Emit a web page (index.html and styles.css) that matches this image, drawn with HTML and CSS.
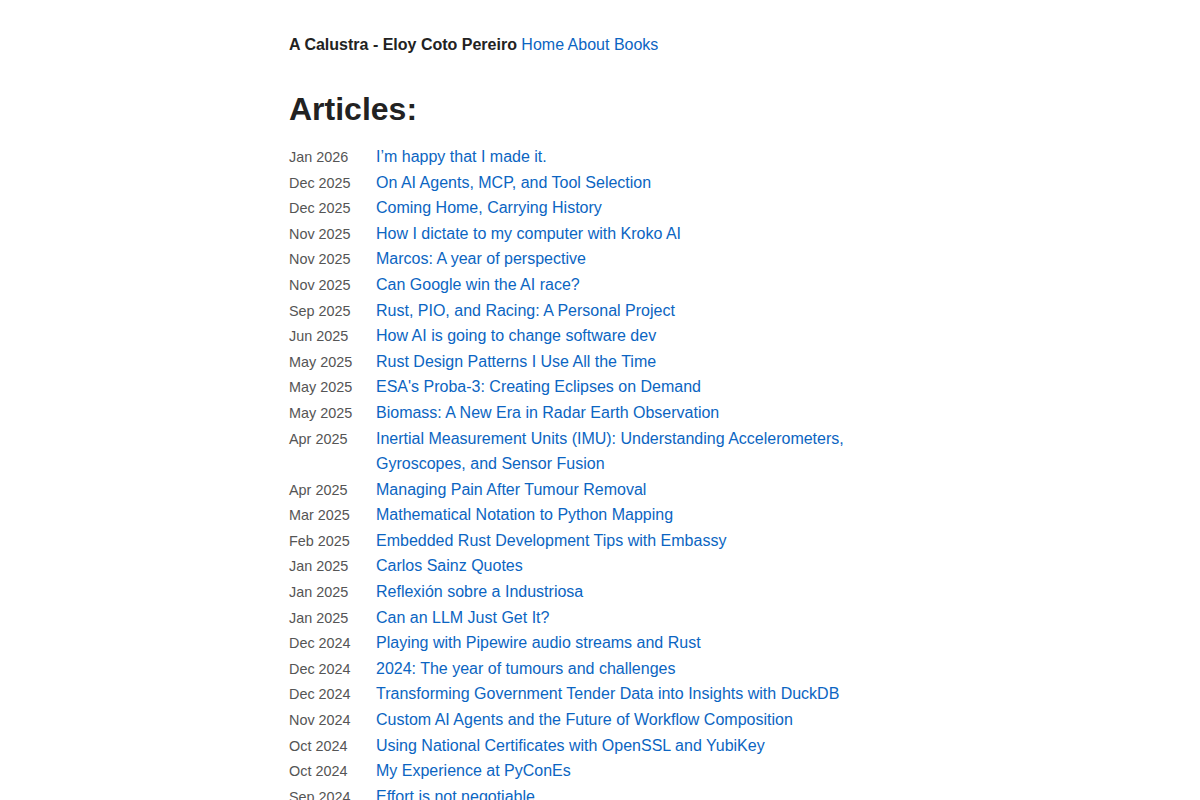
FILE: index.html
```html
<!DOCTYPE html>
<html lang="en">
<head>
    <meta charset="UTF-8">
    <meta name="viewport" content="width=device-width, initial-scale=1.0">
    <title>A Calustra - Eloy Coto Pereiro</title>
    <link rel="stylesheet" href="styles.css">
</head>
<body>
<main class="page">
    <nav class="site-nav">
        <strong class="site-title">A Calustra - Eloy Coto Pereiro</strong>
        <a href="#">Home</a>
        <a href="#">About</a>
        <a href="#">Books</a>
    </nav>

    <h1 class="section-title">Articles:</h1>

    <ul class="post-list">
        <li><span class="post-date">Jan 2026</span><a href="#">I’m happy that I made it.</a></li>
        <li><span class="post-date">Dec 2025</span><a href="#">On AI Agents, MCP, and Tool Selection</a></li>
        <li><span class="post-date">Dec 2025</span><a href="#">Coming Home, Carrying History</a></li>
        <li><span class="post-date">Nov 2025</span><a href="#">How I dictate to my computer with Kroko AI</a></li>
        <li><span class="post-date">Nov 2025</span><a href="#">Marcos: A year of perspective</a></li>
        <li><span class="post-date">Nov 2025</span><a href="#">Can Google win the AI race?</a></li>
        <li><span class="post-date">Sep 2025</span><a href="#">Rust, PIO, and Racing: A Personal Project</a></li>
        <li><span class="post-date">Jun 2025</span><a href="#">How AI is going to change software dev</a></li>
        <li><span class="post-date">May 2025</span><a href="#">Rust Design Patterns I Use All the Time</a></li>
        <li><span class="post-date">May 2025</span><a href="#">ESA's Proba-3: Creating Eclipses on Demand</a></li>
        <li><span class="post-date">May 2025</span><a href="#">Biomass: A New Era in Radar Earth Observation</a></li>
        <li><span class="post-date">Apr 2025</span><a href="#">Inertial Measurement Units (IMU): Understanding Accelerometers, Gyroscopes, and Sensor Fusion</a></li>
        <li><span class="post-date">Apr 2025</span><a href="#">Managing Pain After Tumour Removal</a></li>
        <li><span class="post-date">Mar 2025</span><a href="#">Mathematical Notation to Python Mapping</a></li>
        <li><span class="post-date">Feb 2025</span><a href="#">Embedded Rust Development Tips with Embassy</a></li>
        <li><span class="post-date">Jan 2025</span><a href="#">Carlos Sainz Quotes</a></li>
        <li><span class="post-date">Jan 2025</span><a href="#">Reflexión sobre a Industriosa</a></li>
        <li><span class="post-date">Jan 2025</span><a href="#">Can an LLM Just Get It?</a></li>
        <li><span class="post-date">Dec 2024</span><a href="#">Playing with Pipewire audio streams and Rust</a></li>
        <li><span class="post-date">Dec 2024</span><a href="#">2024: The year of tumours and challenges</a></li>
        <li><span class="post-date">Dec 2024</span><a href="#">Transforming Government Tender Data into Insights with DuckDB</a></li>
        <li><span class="post-date">Nov 2024</span><a href="#">Custom AI Agents and the Future of Workflow Composition</a></li>
        <li><span class="post-date">Oct 2024</span><a href="#">Using National Certificates with OpenSSL and YubiKey</a></li>
        <li><span class="post-date">Oct 2024</span><a href="#">My Experience at PyConEs</a></li>
        <li><span class="post-date">Sep 2024</span><a href="#">Effort is not negotiable</a></li>
    </ul>
</main>
</body>
</html>
```

FILE: styles.css
```css
body {
    margin: 0;
    background: #fff;
    color: #222;
    font-family: "Liberation Sans", Arial, sans-serif;
    font-size: 16px;
    line-height: 1.6;
}
a {
    color: #0b65c2;
    text-decoration: none;
}
.page {
    width: 622px;
    margin: 0 auto;
    padding-top: 32px;
}
.site-title {
    color: #222;
}
.section-title {
    font-size: 32px;
    line-height: 1.2;
    margin: 32px 0 16px;
    color: #222;
}
.post-list {
    list-style: none;
    margin: 0;
    padding: 0;
}
.post-list li {
    display: flex;
    align-items: baseline;
}
.post-date {
    flex: 0 0 87px;
    font-size: 14.4px;
    color: #555;
}
```
